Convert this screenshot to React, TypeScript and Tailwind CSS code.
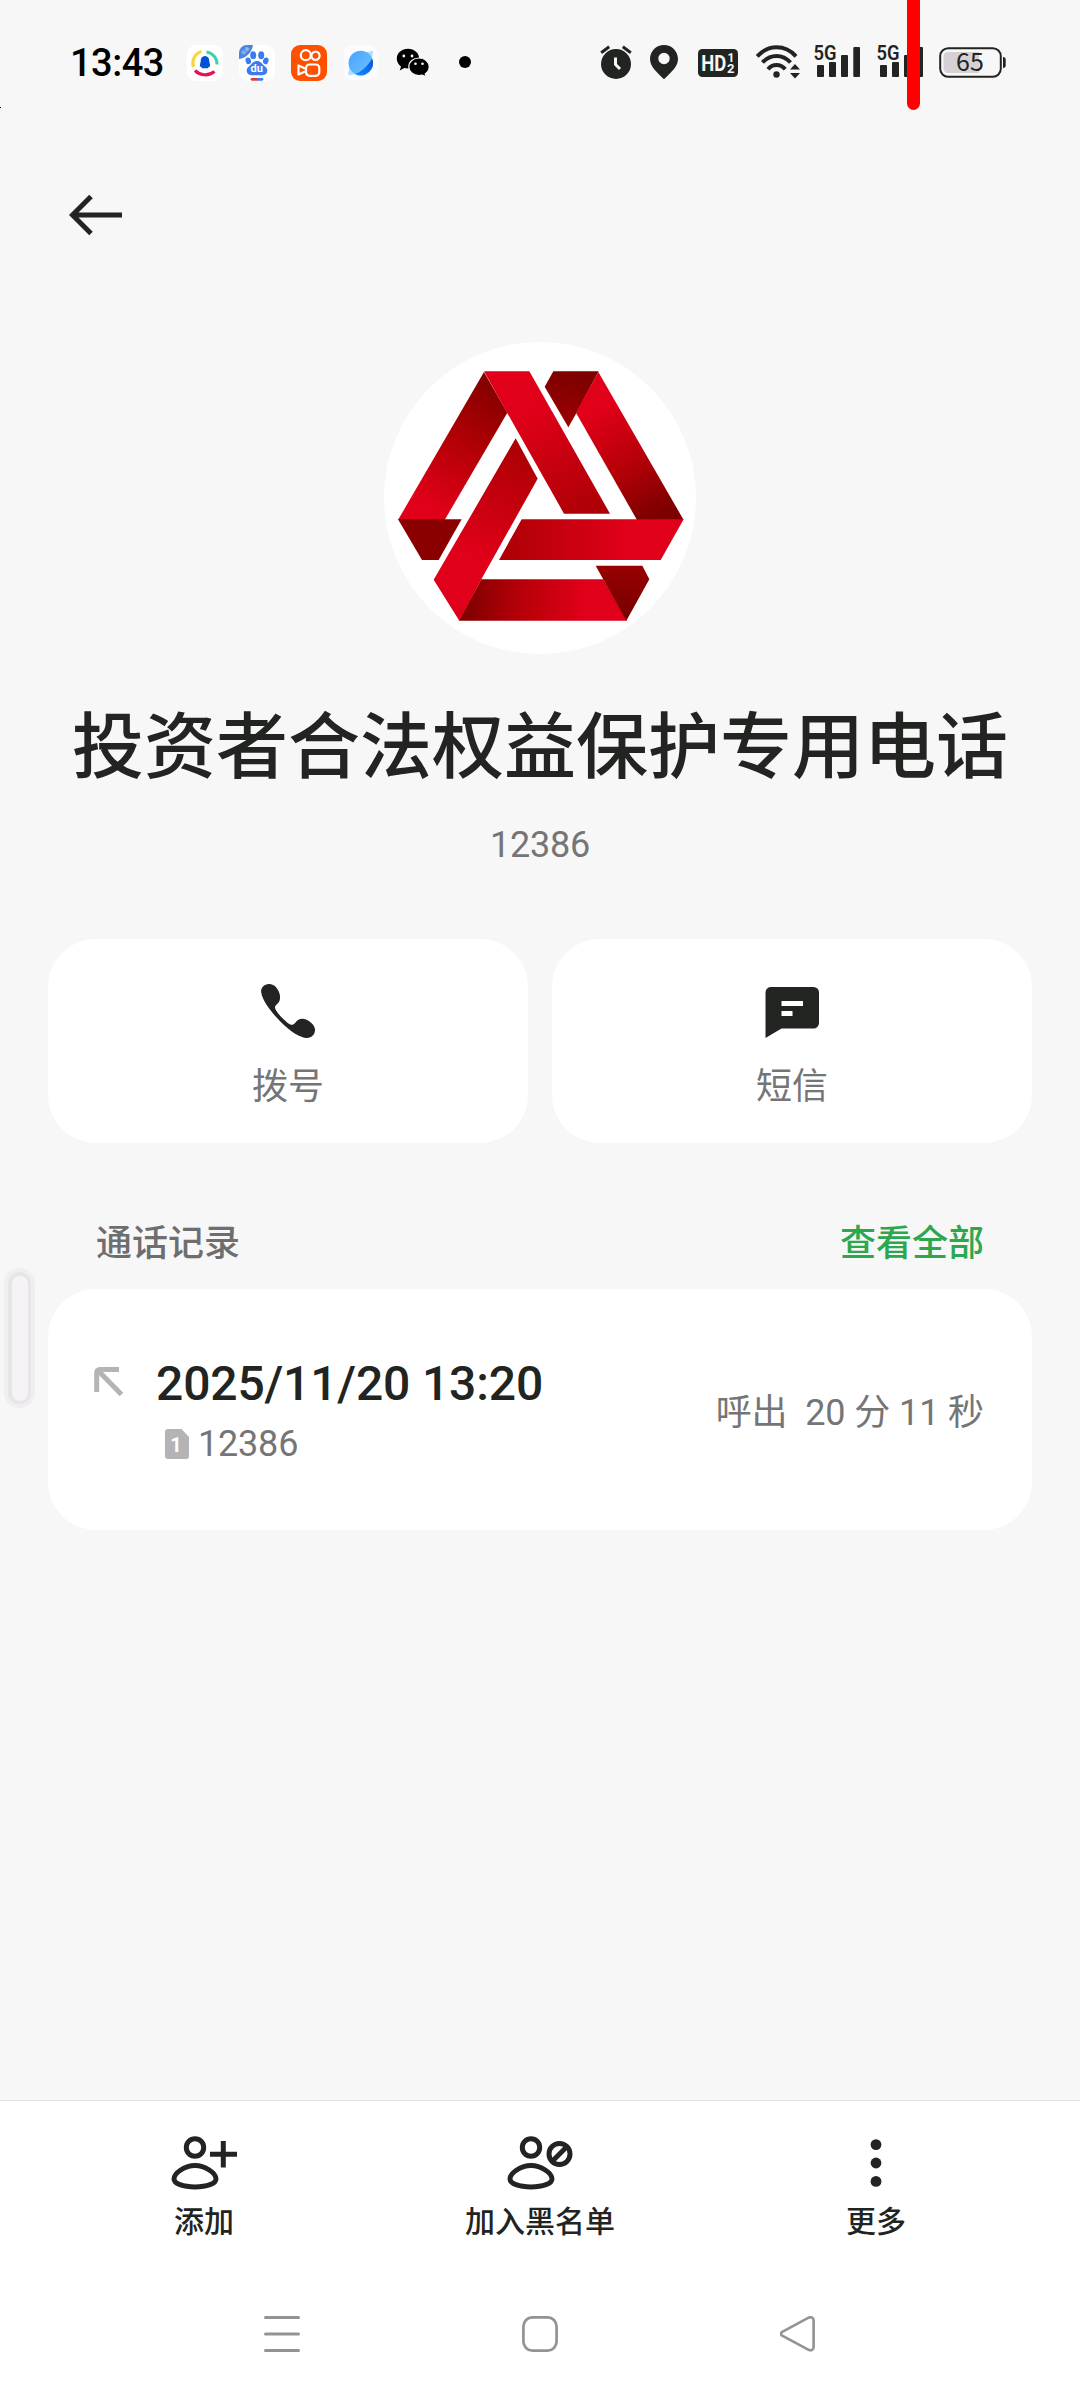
import type { ReactNode } from 'react';

const INK = '#222422';

/* ---------- Status bar ---------- */

function NotificationIcons() {
  return (
    <div className="flex">
      {/* Contacts */}
      <svg width="36" height="36" viewBox="0 0 36 36" fill="none">
        <rect width="36" height="36" rx="9" fill="#fff" />
        <path d="M14.5 6.5A12 12 0 0 0 6.5 22" stroke="#f8d648" strokeWidth="3.2" />
        <path d="M19.5 7A12 12 0 0 1 30 19.5" stroke="#3ecfae" strokeWidth="3" />
        <path d="M8 25.500C13 30.500 21.500 31.500 27.500 26.500" stroke="#e3125f" strokeWidth="3.2" />
        <path d="M18 11c-2.800 0-4.300 2.200-4.300 5.200 0 1.200-.8 2.800-.8 4.600 0 1.300.6 1.300 1.100.6.3.8.7 1.400 1.200 1.900h5.600c.5-.5.900-1.100 1.200-1.900.5.700 1.100.7 1.100-.6 0-1.800-.8-3.400-.8-4.600 0-3-1.500-5.200-4.300-5.200z" fill="#0052d9" />
      </svg>
      {/* Baidu */}
      <svg className="ml-[16px]" width="36" height="36" viewBox="0 0 36 36">
        <rect width="36" height="36" rx="9" fill="#fff" />
        <path d="M8 0h6C13 7 7.500 13 0 14V8a8 8 0 0 1 8-8z" fill="#4a86e0" />
        <text x="1.800" y="7.600" fontSize="4.500" fill="#bcd4fa" transform="rotate(-45 6 6)" className="font-['Noto_Sans_CJK_SC',sans-serif]">极速</text>
        <g fill="#3a7cf0">
          <ellipse cx="14.200" cy="10.300" rx="3" ry="4" />
          <ellipse cx="22.200" cy="10.300" rx="3" ry="4" />
          <ellipse cx="9.300" cy="15.800" rx="2.700" ry="3.400" transform="rotate(-15 9.300 15.800)" />
          <ellipse cx="26.800" cy="15.800" rx="2.700" ry="3.400" transform="rotate(15 26.800 15.800)" />
          <path d="M18 16c3.700 0 4.700 2.700 7.300 4.800 2.800 2.200 3.600 4.200 2.600 6.700-1.300 3.200-5 2.700-9.900 2.700s-8.600.5-9.900-2.700c-1-2.500-.2-4.500 2.600-6.700C13.300 18.700 14.300 16 18 16z" />
        </g>
        <text x="17.800" y="27" fontSize="11" fontWeight="700" fill="#fff" textAnchor="middle" className="font-['Roboto',sans-serif]">du</text>
        <path d="M13 33h5v2.700h-5a1.300 1.300 0 0 1 0-2.700z" fill="#e2393d" />
        <path d="M18 33h5a1.300 1.300 0 0 1 0 2.700h-5z" fill="#3a7cf0" />
      </svg>
      {/* Kwai */}
      <svg className="ml-[16px]" width="36" height="36" viewBox="0 0 36 36" fill="none">
        <rect width="36" height="36" rx="9" fill="#ff5000" />
        <g stroke="#fff" strokeWidth="2.200">
          <circle cx="14.800" cy="10.200" r="5" />
          <circle cx="24.500" cy="10.800" r="4.100" />
          <rect x="15" y="19.500" width="13.300" height="11.300" rx="3.500" />
          <path d="M14 23.500l-6.500-3v9l6.500-3" strokeLinejoin="round" />
        </g>
      </svg>
      {/* Browser */}
      <svg className="ml-[16px]" width="36" height="36" viewBox="0 0 36 36">
        <defs>
          <linearGradient id="planet" x1="0" y1="0" x2="1" y2="1">
            <stop offset="0" stopColor="#4aa2ff" />
            <stop offset="1" stopColor="#6cc4ff" />
          </linearGradient>
          <linearGradient id="planetDark" x1="1" y1="0" x2="0" y2="1">
            <stop offset="0" stopColor="#0a4fe0" />
            <stop offset="1" stopColor="#1690f5" />
          </linearGradient>
        </defs>
        <rect x="0.500" width="34.500" height="35" rx="9" fill="#fcfbff" />
        <path d="M22 7.500l7-1.500c1.300 0 1.200 1.500.8 3L28 15zM7 22.500L5.200 28.200c-.2 1.800.8 2.200 2.500 1.900L13 29z" fill="#a9e0fb" />
        <circle cx="17.800" cy="18" r="12.300" fill="url(#planet)" />
        <path d="M29 13.300a12.300 12.300 0 0 1-17 15.600C18.300 27 25.800 20.500 29 13.300z" fill="url(#planetDark)" />
      </svg>
      {/* WeChat */}
      <svg className="ml-[17px]" width="36" height="36" viewBox="0 0 36 36">
        <path d="M12 3.800C5.600 3.800.8 8.200.8 13.700c0 3.200 1.700 5.900 4.200 7.700l-1.300 4.200 4.700-2.500c1.200.3 2.300.5 3.600.5 6.400 0 11.200-4.400 11.200-9.900S18.400 3.800 12 3.800z" fill="#000" />
        <path d="M23 13c-5.700 0-10.200 3.800-10.200 8.800S17.300 30.600 23 30.600c1.200 0 2.300-.2 3.400-.5l4 2-1.200-3.200c2.500-1.700 4-4.200 4-7.100C33.200 16.800 28.700 13 23 13z" fill="#000" stroke="#f7f7f7" strokeWidth="1.200" />
        <g fill="#f7f7f7">
          <circle cx="7.800" cy="11" r="1.400" />
          <circle cx="16" cy="11" r="1.400" />
          <circle cx="19.500" cy="18.700" r="1.300" />
          <circle cx="26.500" cy="18.700" r="1.300" />
        </g>
      </svg>
      <svg className="ml-[27px]" width="12" height="36" viewBox="0 0 12 36">
        <circle cx="6" cy="17" r="6" fill="#000" />
      </svg>
    </div>
  );
}

function Signal() {
  return (
    <svg className="overflow-visible" width="47" height="36" viewBox="0 0 47 36" fill={INK}>
      <text x="-0.500" y="15" fontSize="20.500" fontWeight="600" textLength="23" lengthAdjust="spacingAndGlyphs" className="font-['Roboto',sans-serif]">5G</text>
      <rect x="3" y="20" width="7" height="12" rx="1" />
      <rect x="15" y="17" width="7" height="15" rx="1" />
      <rect x="27" y="10" width="7" height="22" rx="1" />
      <rect x="39.300" y="2" width="6.700" height="30" rx="1" />
    </svg>
  );
}

function SystemIcons() {
  return (
    <div className="flex">
      {/* Alarm */}
      <svg width="32" height="36" viewBox="0 0 32 36" fill="none">
        <circle cx="16" cy="19" r="15" fill={INK} />
        <path d="M1.200 7.800L9.200 1.800M30.800 7.800L22.800 1.800" stroke={INK} strokeWidth="3" />
        <path d="M15.500 12.500v7l4.500 4.500" stroke="#f7f7f7" strokeWidth="3" />
      </svg>
      {/* Location */}
      <svg className="ml-[18px]" width="28" height="36" viewBox="0 0 28 36">
        <path fillRule="evenodd" d="M14 0C6.300 0 0 6.200 0 14c0 7.500 7 13.500 14 20.300C21 27.500 28 21.500 28 14 28 6.200 21.700 0 14 0zm0 7.800a5.700 5.700 0 1 1 0 11.400 5.700 5.700 0 0 1 0-11.400z" fill={INK} />
      </svg>
      {/* HD */}
      <svg className="ml-[20px]" width="40" height="36" viewBox="0 0 40 36">
        <rect y="4" width="40" height="28" rx="4.500" fill={INK} />
        <g fill="#f7f7f7" fontWeight="700" className="font-['Roboto',sans-serif]">
          <text x="3.200" y="26" fontSize="22" textLength="25" lengthAdjust="spacingAndGlyphs">HD</text>
          <text x="29.500" y="16.800" fontSize="12">1</text>
          <text x="29" y="28.300" fontSize="13">2</text>
        </g>
      </svg>
      {/* Wi-Fi */}
      <svg className="ml-[18px]" width="45" height="36" viewBox="0 0 45 36" fill="none">
        <g stroke={INK} strokeWidth="4">
          <path d="M1.200 11.300C12.500-.700 29-.700 40 11.300" />
          <path d="M6.500 17.500C14.500 8.700 26.500 8.700 34.500 17.500" />
          <path d="M12 24.300C16.500 18.700 24.500 18.700 29.200 24.300" />
        </g>
        <circle cx="20.500" cy="29.500" r="3.200" fill={INK} />
        <path d="M39 19l5 5.500H34zM39 33.500l-5-5.500h10z" fill={INK} />
      </svg>
      <div className="ml-[13px]">
        <Signal />
      </div>
      <div className="ml-[16px]">
        <Signal />
      </div>
      {/* Battery */}
      <svg className="ml-[15px]" width="68" height="36" viewBox="0 0 68 36">
        <rect x="1.200" y="3.200" width="60.600" height="28.600" rx="8" fill="none" stroke={INK} strokeWidth="2" />
        <path d="M9 7h31v21H9a4.500 4.500 0 0 1-4.500-4.500v-12A4.500 4.500 0 0 1 9 7z" fill="#d4d2d5" />
        <path d="M64 12c1.800.2 2.700 1 2.700 2.500v6c0 1.500-.9 2.300-2.700 2.500z" fill={INK} />
        <text x="31" y="26.200" fontSize="25" textAnchor="middle" fill={INK} className="font-['Noto_Sans_CJK_SC',sans-serif]">65</text>
      </svg>
    </div>
  );
}

function StatusBar() {
  return (
    <div className="flex h-[170px] items-start pt-[45px] pl-[70px] text-black">
      <div className="w-[117px] text-[38px] leading-[36px] font-medium tracking-[-0.5px]">13:43</div>
      <NotificationIcons />
      <div className="ml-[129px]">
        <SystemIcons />
      </div>
    </div>
  );
}

/* ---------- Contact ---------- */

function Logo() {
  return (
    <svg width="312" height="312" viewBox="42 36 936 936">
      <defs>
        <linearGradient id="leftArm" gradientUnits="userSpaceOnUse" x1="370" y1="170" x2="170" y2="520">
          <stop offset="0" stopColor="#860000" />
          <stop offset="0.500" stopColor="#b40006" />
          <stop offset="1" stopColor="#e00019" />
        </linearGradient>
        <linearGradient id="midArm" gradientUnits="userSpaceOnUse" x1="470" y1="250" x2="660" y2="560">
          <stop offset="0" stopColor="#e00019" />
          <stop offset="1" stopColor="#ac0005" />
        </linearGradient>
        <linearGradient id="topFold" gradientUnits="userSpaceOnUse" x1="620" y1="120" x2="590" y2="290">
          <stop offset="0" stopColor="#7c0000" />
          <stop offset="1" stopColor="#9c0002" />
        </linearGradient>
        <linearGradient id="rightArm" gradientUnits="userSpaceOnUse" x1="690" y1="240" x2="870" y2="550">
          <stop offset="0" stopColor="#e00019" />
          <stop offset="0.500" stopColor="#b80009" />
          <stop offset="1" stopColor="#7c0000" />
        </linearGradient>
        <linearGradient id="innerArm" gradientUnits="userSpaceOnUse" x1="460" y1="370" x2="300" y2="670">
          <stop offset="0" stopColor="#ae0005" />
          <stop offset="1" stopColor="#e00019" />
        </linearGradient>
        <linearGradient id="crossBar" gradientUnits="userSpaceOnUse" x1="400" y1="0" x2="760" y2="0">
          <stop offset="0" stopColor="#ae0005" />
          <stop offset="1" stopColor="#e00019" />
        </linearGradient>
        <linearGradient id="bottomBar" gradientUnits="userSpaceOnUse" x1="290" y1="0" x2="640" y2="0">
          <stop offset="0" stopColor="#820000" />
          <stop offset="0.500" stopColor="#ba0009" />
          <stop offset="1" stopColor="#e00019" />
        </linearGradient>
        <linearGradient id="bottomFold" gradientUnits="userSpaceOnUse" x1="760" y1="710" x2="760" y2="860">
          <stop offset="0" stopColor="#980000" />
          <stop offset="1" stopColor="#780000" />
        </linearGradient>
      </defs>
      <path d="M342 126L412 248L224 570H84z" fill="url(#leftArm)" />
      <path d="M84 568H275L206 690H156z" fill="#8a0000" />
      <path d="M342 124H478L720 551H582L410 246z" fill="url(#midArm)" />
      <path d="M550 124H686L619 250L595 292L524 170z" fill="url(#topFold)" />
      <path d="M685 126L941 570H801L618 248z" fill="url(#rightArm)" />
      <path d="M334 748H700L771 872H266z" fill="url(#bottomBar)" />
      <path d="M437 325L503 446L334 748L268 872L191 749z" fill="url(#innerArm)" />
      <path d="M455 568H941L872 690H387z" fill="url(#crossBar)" />
      <path d="M677 707H817L838 748L769 872z" fill="url(#bottomFold)" />
    </svg>
  );
}

function PhoneIcon() {
  return (
    <svg width="54" height="54" viewBox="0 0 54 54">
      <path d="M8.500 0C12 .200 14.500 2 16.500 5.200c2.800 4.300 3.200 9 1.700 12.200-1 2-3.800 3.300-4.200 5.600-.3 2.500 3.500 7 6.800 10.500 3.600 3.700 8 7.800 10.700 7.300 2.300-.5 3.300-3.300 5.500-4.700 3-2 7-1.700 10.500.7 4.300 3 6.800 5.800 6.500 9.700-.3 4.200-3.700 7.300-7.700 7.500-6 .2-16.500-6-26-15.500C10.500 28.500 1.500 17 .2 8.500-.500 3.500 3.500-.200 8.500 0z" fill={INK} />
    </svg>
  );
}

function MessageIcon() {
  return (
    <svg width="54" height="54" viewBox="0 0 54 54">
      <path fillRule="evenodd" d="M5.500 3H48.500a5.500 5.500 0 0 1 5.500 5.500v30.500a5.500 5.500 0 0 1-5.500 5.500H16.500L.500 54V8.500A5.500 5.500 0 0 1 5.500 3zM16.500 17v5h21.500v-5zM16.500 27v5H27.500v-5z" fill={INK} />
    </svg>
  );
}

function ActionCard({ icon, label }: { icon: ReactNode; label: string }) {
  return (
    <button className="flex h-[204px] flex-1 flex-col items-center rounded-[48px] bg-white pt-[45px]">
      {icon}
      <span className="mt-[22px] text-[36px] leading-[54px] text-[#757575]">{label}</span>
    </button>
  );
}

function CallRecord() {
  return (
    <div className="mx-[48px] flex h-[241px] items-start rounded-[48px] bg-white pr-[48px] pl-[46px]">
      {/* Call direction */}
      <svg className="mt-[78px]" width="30" height="30" viewBox="0 0 30 30" fill="none" stroke="#b5b3b5">
        <path d="M2.700 25V5.500a3 3 0 0 1 3-3H25" strokeWidth="5" />
        <path d="M4.500 4L27.500 27.500" strokeWidth="5" />
      </svg>
      <div className="ml-[32px] pt-[67px]">
        <div className="text-[48px] leading-[56px] font-medium tracking-[-0.15px] text-[#222422]">2025/11/20 13:20</div>
        <div className="mt-[11px] flex items-center pl-[9px]">
          <svg width="24" height="30" viewBox="0 0 24 30">
            <path d="M3 0h13.500L24 8v19a3 3 0 0 1-3 3H3a3 3 0 0 1-3-3V3a3 3 0 0 1 3-3z" fill="#b5b3b5" />
            <text x="11" y="23" fontSize="20" fontWeight="700" textAnchor="middle" fill="#fff" className="font-['Roboto',sans-serif]">1</text>
          </svg>
          <span className="ml-[9px] text-[36px] leading-[42px] tracking-[-0.2px] text-[#757575]">12386</span>
        </div>
      </div>
      <div className="ml-auto pt-[97px] text-[36px] leading-[54px] tracking-[-0.1px] whitespace-pre text-[#757575]">呼出  20 分 11 秒</div>
    </div>
  );
}

/* ---------- Bottom bar ---------- */

function Person() {
  return (
    <g fill="none" stroke={INK} strokeWidth="5">
      <circle cx="24" cy="11.500" r="8.700" />
      <path d="M24 29.500C34 29.500 45 37 45 43C45 47.500 36 51 24 51S3 47.500 3 43C3 37 14 29.500 24 29.500z" />
    </g>
  );
}

function AddIcon() {
  return (
    <svg width="66" height="54" viewBox="0 0 66 54" fill="none">
      <Person />
      <path d="M39 18.200H66M52.300 5v26.500" stroke={INK} strokeWidth="5" />
    </svg>
  );
}

function BlockIcon() {
  return (
    <svg width="66" height="54" viewBox="0 0 66 54" fill="none">
      <Person />
      <circle cx="52.500" cy="18" r="10.500" stroke={INK} strokeWidth="5" />
      <path d="M45.500 25L59.500 11" stroke={INK} strokeWidth="5" />
    </svg>
  );
}

function MoreIcon() {
  return (
    <svg width="66" height="54" viewBox="0 0 66 54" fill={INK}>
      <circle cx="33" cy="8.600" r="5.400" />
      <circle cx="33" cy="27" r="5.400" />
      <circle cx="33" cy="45.400" r="5.400" />
    </svg>
  );
}

function Tab({ icon, label }: { icon: ReactNode; label: string }) {
  return (
    <button className="flex flex-1 flex-col items-center pt-[35px]">
      {icon}
      <span className="mt-[10px] text-[30px] leading-[44px] font-medium text-[#222422]">{label}</span>
    </button>
  );
}

function SystemNav() {
  return (
    <div className="flex justify-center gap-[222px]">
      <svg width="36" height="36" viewBox="0 0 36 36" stroke="#939393" strokeWidth="3" strokeLinecap="round">
        <path d="M1.500 1.500h33M1.500 18h33M1.500 34.500h33" />
      </svg>
      <svg width="36" height="36" viewBox="0 0 36 36" fill="none" stroke="#939393" strokeWidth="2.700">
        <rect x="1.400" y="1.400" width="33.200" height="33.200" rx="9" />
      </svg>
      <svg width="36" height="36" viewBox="0 0 36 36" fill="none" stroke="#939393" strokeWidth="2.600">
        <path d="M2.200 15.800L28.600 1.700c2.700-1.200 5 .2 5 2.800v26.500c0 2.600-2.300 4-5 2.800L2.200 19.700c-1.600-1-1.600-2.900 0-3.900z" />
      </svg>
    </div>
  );
}

export default function App() {
  return (
    <div className="relative flex h-[2400px] w-[1080px] flex-col overflow-hidden bg-[#f7f7f7] font-['Roboto','Noto_Sans_CJK_SC',sans-serif]">
      <StatusBar />

      {/* Back */}
      <div className="h-[172px] pt-[24px] pl-[69px]">
        <svg width="54" height="42" viewBox="0 0 54 42" fill="none" stroke={INK} strokeWidth="5">
          <path d="M4 21H53M22 2.500L3.500 21L22 39.500" />
        </svg>
      </div>

      {/* Contact header */}
      <div className="flex h-[597px] flex-col items-center">
        <div className="size-[312px] overflow-hidden rounded-full bg-white">
          <Logo />
        </div>
        <h1 className="mt-[42px] text-[72px] leading-[104px] font-medium whitespace-nowrap text-[#222422]">投资者合法权益保护专用电话</h1>
        <div className="mt-[24px] text-[36px] leading-[42px] tracking-[-0.2px] text-[#757575]">12386</div>
      </div>

      <div className="flex gap-[24px] px-[48px]">
        <ActionCard icon={<PhoneIcon />} label="拨号" />
        <ActionCard icon={<MessageIcon />} label="短信" />
      </div>

      {/* Call log */}
      <div className="flex h-[146px] items-start justify-between px-[96px] pt-[74px] text-[36px] leading-[54px] font-medium">
        <span className="text-[#6e6e6e]">通话记录</span>
        <span className="text-[#2da74e]">查看全部</span>
      </div>
      <CallRecord />

      <div className="mt-auto h-[300px] border-t border-[#e3e3e3] bg-white">
        <div className="flex h-[215px] px-[36px]">
          <Tab icon={<AddIcon />} label="添加" />
          <Tab icon={<BlockIcon />} label="加入黑名单" />
          <Tab icon={<MoreIcon />} label="更多" />
        </div>
        <SystemNav />
      </div>

      {/* Overlays: sidebar handle, marker line */}
      <div className="absolute top-[1268px] left-[4px] h-[140px] w-[31px] rounded-full bg-[#efefef] p-[4px]">
        <div className="h-full w-full rounded-full bg-[#e6e6e6] p-[3.5px]">
          <div className="h-full w-full rounded-full bg-[#f6f2f8]"></div>
        </div>
      </div>
      <div className="absolute top-0 left-[907px] h-[110px] w-[13px] rounded-b-full bg-[#ff0000]"></div>
      <div className="absolute top-[107px] left-0 size-px bg-black"></div>
    </div>
  );
}
